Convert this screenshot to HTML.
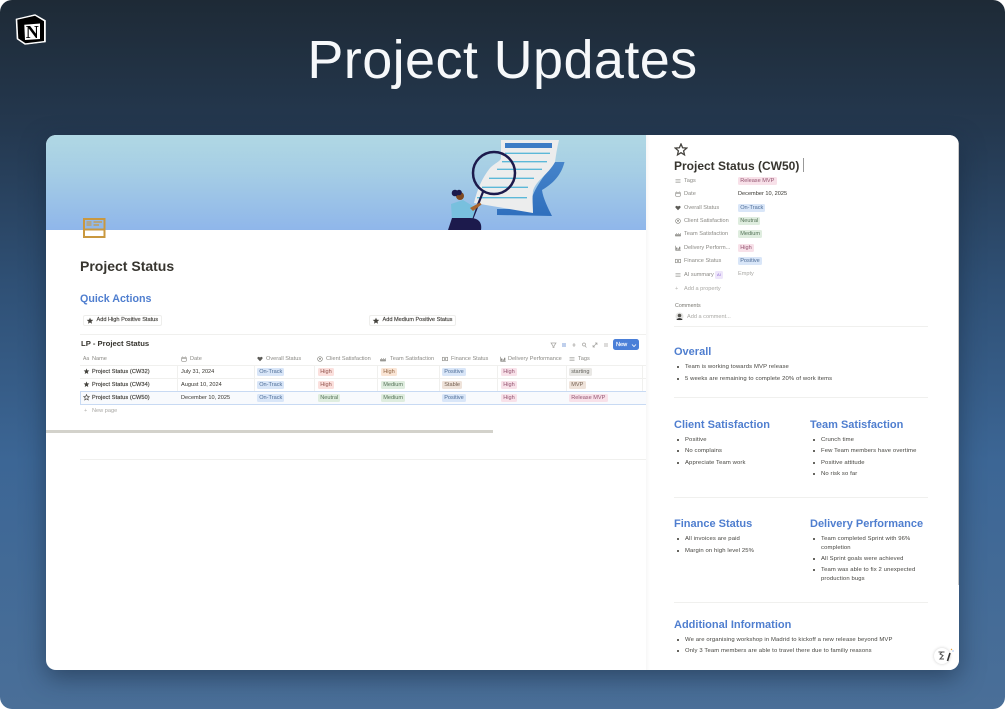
<!DOCTYPE html>
<html lang="en"><head><meta charset="utf-8"><title>Project Updates</title>
<style>
html,body{margin:0;padding:0;background:#fff}
body{width:1005px;height:709px;overflow:hidden;position:relative;font-family:"Liberation Sans",sans-serif}
#bg{position:absolute;inset:0;border-radius:12px;background:linear-gradient(180deg,#1e2a36 0%,#24384f 18%,#2f5075 40%,#3c6695 65%,#4a6f98 100%)}
h1{position:absolute;left:0;width:1005px;top:26px;margin:0;text-align:center;color:#f6f8fa;font-size:54px;line-height:68px;font-weight:400;letter-spacing:.4px}
#card{position:absolute;left:46px;top:135px;width:913px;height:535px;background:#fff;border-radius:10px;overflow:hidden;box-shadow:0 8px 24px rgba(20,35,55,.5)}
#wrap{position:absolute;left:-46px;top:-135px;width:1005px;height:709px;filter:blur(.35px)}
#hero{position:absolute;left:46px;top:135px;width:600px;height:95px;background:linear-gradient(180deg,#b0d8e4 0%,#a5cde5 40%,#8fb6ea 100%)}
#panel{position:absolute;left:646px;top:135px;width:313px;height:535px;background:linear-gradient(90deg,#f7f7f7 0,#fff 4px)}
.t,.p{position:absolute;white-space:nowrap;font-size:5.6px;line-height:8px;color:#37352f}
.g{color:#8a8984}
.m{color:#45433e;-webkit-text-stroke:.18px #45433e;letter-spacing:.1px}
.p{height:8px;padding:0 2.2px;border-radius:1.5px;line-height:8px}
.bl{background:#d9e6f8;color:#4d6c96}.re{background:#fbe0dd;color:#94554e}.gr{background:#dfeddf;color:#567459}
.or{background:#fae5d5;color:#8f6444}.pk{background:#f8e1e9;color:#935370}.gy{background:#e9e8e5;color:#65645e}.br{background:#efe3da;color:#745f50}
.h{position:absolute;white-space:nowrap;font-weight:700;color:#4f7ecf;font-size:11px;line-height:14px}
.hr{position:absolute;height:1px;background:#f0f0ee}
.btn{position:absolute;height:9px;background:#fff;border:1px solid #eeeeec;border-radius:2px;font-size:5.6px;line-height:9px;color:#45433e;-webkit-text-stroke:.15px #45433e;white-space:nowrap}
.li{position:absolute;white-space:nowrap;font-size:5.9px;letter-spacing:.12px;line-height:8px;color:#45443f}
.li:before{content:"";position:absolute;left:-8.5px;top:3px;width:2px;height:2px;border-radius:50%;background:#37352f}
.v{position:absolute;width:1px;background:#f0f0ee}
svg{position:absolute}
svg.i{width:6px;height:6px}
</style></head><body>
<svg width="0" height="0" style="left:0;top:0"><defs>
<symbol id="list" viewBox="0 0 12 12"><path d="M1 2.500H11M1 6H11M1 9.500H11" stroke="#8a8984" stroke-width="1.200" fill="none"/></symbol>
<symbol id="cal" viewBox="0 0 12 12"><rect x="1.500" y="2.500" width="9" height="8" rx="1" fill="none" stroke="#77766f" stroke-width="1.100"/><path d="M1.500 4.800H10.500M3.500 1V3M8.500 1V3" stroke="#77766f" stroke-width="1.100"/></symbol>
<symbol id="heart" viewBox="0 0 12 12"><path d="M6 10.500L1.200 5.500C.2 3.500 1.500 1.800 3.300 1.800C4.500 1.800 5.500 2.500 6 3.300C6.500 2.500 7.500 1.800 8.700 1.800C10.500 1.800 11.800 3.500 10.800 5.500Z" fill="#5c5b56"/></symbol>
<symbol id="face" viewBox="0 0 12 12"><circle cx="6" cy="6" r="4.800" fill="none" stroke="#77766f" stroke-width="1.100"/><circle cx="6" cy="4.800" r="1.500" fill="#77766f"/><path d="M3.500 8.500C4.500 7 7.500 7 8.500 8.500" stroke="#77766f" fill="none"/></symbol>
<symbol id="team" viewBox="0 0 12 12"><path d="M.5 10V6M3 10V4.500M5 10V6M7 10V4.500M9 10V6M11.500 10V4.500M.5 10H11.500" stroke="#66655f" stroke-width="1.100" fill="none"/></symbol>
<symbol id="chart" viewBox="0 0 12 12"><path d="M1 1.500V10.500H11.500" stroke="#66655f" fill="none"/><path d="M2.500 5H4.500V9.500H2.500ZM5.500 7H7.500V9.500H5.500ZM8.500 3.500H10.500V9.500H8.500Z" fill="#66655f"/></symbol>
<symbol id="money" viewBox="0 0 12 12"><rect x="1" y="2.500" width="10" height="7" fill="none" stroke="#77766f" stroke-width="1.100"/><rect x="4.500" y="4.500" width="3" height="3" fill="#77766f"/></symbol>
<symbol id="star" viewBox="-7 -7 14 14"><polygon points="0,-6 1.600,-2.200 5.700,-1.900 2.600,.8 3.500,4.900 0,2.700 -3.500,4.900 -2.600,.8 -5.700,-1.900 -1.600,-2.200" fill="#45433e"/></symbol>
<symbol id="ostar" viewBox="-7 -7 14 14"><polygon points="0,-6 1.600,-2.200 5.700,-1.900 2.600,.8 3.500,4.900 0,2.700 -3.500,4.900 -2.600,.8 -5.700,-1.900 -1.600,-2.200" fill="none" stroke="#45433e" stroke-width="1.300"/></symbol>
</defs></svg>
<div id="bg"></div>
<svg style="left:15px;top:14px" width="31" height="31" viewBox="0 0 31 31"><path d="M1 5 L20 .5 L30.500 6.500 V28 L10 30.500 L2 25 Z" fill="#fff" stroke="#fff" stroke-width=".6" stroke-linejoin="round"/><path d="M2.300 5.700 L20 1.800 L29 7.300 V27 L10.500 29.300 L3.300 24.500 Z" fill="#000"/><path d="M9.300 10.800 L25 9.500 V25 L10 26 Z" fill="#fff"/><text x="17.300" y="23.800" text-anchor="middle" font-family="Liberation Serif,serif" font-weight="700" font-size="18" fill="#000">N</text></svg>
<h1>Project Updates</h1>
<div id="card"><div id="wrap">
<div id="hero"></div>
<svg style="left:440px;top:135px" width="130" height="95" viewBox="440 135 130 95">
<defs><linearGradient id="sw" x1="0" y1="0" x2="0" y2="1"><stop offset="0" stop-color="#4684ca"/><stop offset="1" stop-color="#2f6fbd"/></linearGradient></defs>
<path d="M555 162 H564.500 C562 172 556 182 542 190 C543 198 548 208 552 216 L497 215 V209 H530 C530 195 540 180 555 162Z" fill="url(#sw)"/>
<path d="M501 140 H559 C557 148 556 155 555 162 C548 175 536 180 533 191 C532 199 533 206 533 213 L474 203 C477 190 482 178 490 168 C495 163 501 161 501 158 Z" fill="#eceded"/>
<path d="M505 143 H552 V148 H505 Z" fill="#3b7cc5"/>
<g stroke="#5bb8d8" stroke-width="1.400"><path d="M505 153.300H550M502 161.700H547M497 169.300H542M489 178.300H534M482 187.300H528M477 197.700H527"/></g>
<circle cx="494" cy="173" r="21" fill="none" stroke="#1c1a4c" stroke-width="2.500"/>
<path d="M483 192 L471 222" stroke="#1c1a4c" stroke-width="2.200"/>
<circle cx="460" cy="196" r="4" fill="#7f4a22"/><circle cx="455" cy="193" r="3.300" fill="#1c1a4c"/><circle cx="459" cy="192.500" r="2.800" fill="#1c1a4c"/>
<path d="M451 204 L463 200 L476 208 L472 220 H452 Z" fill="#78c0de"/>
<path d="M470 208 L480 202.500 L481.500 204.500 L473 211 Z" fill="#a8632c"/>
<path d="M452 218 H470 C480 218 482 224 481 230 H448 Z" fill="#1c1a4c"/>
</svg>
<svg style="left:83px;top:218px" width="23" height="20" viewBox="0 0 23 20"><rect x="1" y="1" width="20.500" height="18" fill="none" stroke="#c9983f" stroke-width="2"/><rect x="1" y="10.500" width="20.500" height="2" fill="#c9983f"/><rect x="3.500" y="3" width="5" height="5" fill="#c9983f" opacity=".55"/><path d="M10.500 4H19M10.500 7H16" stroke="#c9983f" stroke-width="1.200"/><rect x="2" y="12.500" width="18.500" height="5.500" fill="#fff"/></svg>
<div class="t" style="left:80px;top:258px;font-size:14px;line-height:17px;font-weight:700;color:#37352f">Project Status</div>
<div class="h" style="left:80px;top:292px;font-size:10.700px">Quick Actions</div>

<div class="btn" style="left:83px;top:315px;width:77px;text-indent:12.500px">Add High Positive Status</div>
<svg style="left:86px;top:317px" width="8" height="8"><use href="#star"/></svg>
<div class="btn" style="left:369px;top:315px;width:85px;text-indent:12.500px">Add Medium Positive Status</div>
<svg style="left:372px;top:317px" width="8" height="8"><use href="#star"/></svg>
<div class="hr" style="left:80px;top:334px;width:566px"></div>
<div class="t" style="left:81px;top:339px;font-size:7.700px;line-height:10px;font-weight:700;color:#37352f">LP - Project Status</div>

<svg style="left:549px;top:341px" width="62" height="8" viewBox="0 0 62 8" fill="none" stroke="#a5a4a0" stroke-width=".7"><path d="M2 2H7L5 5V6.500H4V5Z"/><path d="M14 2V6M16 2V6" stroke="#4a78c8"/><path d="M25 2V6M23.500 4H26.500"/><circle cx="35" cy="3.500" r="1.500"/><path d="M36 5L37.500 6.500M44 6L48 2M44 4V6H46M46 2H48V4"/><path d="M55 3H59M55 5H59"/></svg>
<div style="position:absolute;left:613px;top:339px;width:26px;height:11px;border-radius:2.500px;background:#4a7fd8"></div>
<div class="t" style="left:616px;top:340.500px;color:#fff;-webkit-text-stroke:.15px #fff">New</div>
<svg style="left:631px;top:343px" width="6" height="5" viewBox="0 0 6 5"><path d="M1 1.500L3 3.500L5 1.500" stroke="#fff" stroke-width=".8" fill="none"/></svg>

<div class="hr" style="left:80px;top:365px;width:566px"></div>
<div class="hr" style="left:80px;top:378px;width:566px"></div>
<div class="v" style="left:177px;top:365px;height:39px"></div><div class="v" style="left:254px;top:365px;height:39px"></div><div class="v" style="left:314px;top:365px;height:39px"></div><div class="v" style="left:377px;top:365px;height:39px"></div><div class="v" style="left:439px;top:365px;height:39px"></div><div class="v" style="left:497px;top:365px;height:39px"></div><div class="v" style="left:566px;top:365px;height:39px"></div><div class="v" style="left:642px;top:365px;height:39px"></div>
<div style="position:absolute;left:80px;top:391px;width:566px;height:12px;border:1px solid #c8daf3;border-right:0;background:#f8fafd"></div>

<div class="t g" style="left:83px;top:355px;font-size:5px">Aa</div><div class="t g" style="left:92px;top:355px">Name</div>
<svg class="i" style="left:181px;top:356px"><use href="#cal"/></svg><div class="t g" style="left:190px;top:355px">Date</div>
<svg class="i" style="left:257px;top:356px"><use href="#heart"/></svg><div class="t g" style="left:266px;top:355px">Overall Status</div>
<svg class="i" style="left:317px;top:356px"><use href="#face"/></svg><div class="t g" style="left:326px;top:355px">Client Satisfaction</div>
<svg class="i" style="left:380px;top:356px"><use href="#team"/></svg><div class="t g" style="left:390px;top:355px">Team Satisfaction</div>
<svg class="i" style="left:442px;top:356px"><use href="#money"/></svg><div class="t g" style="left:451px;top:355px">Finance Status</div>
<svg class="i" style="left:500px;top:356px"><use href="#chart"/></svg><div class="t g" style="left:508px;top:355px">Delivery Performance</div>
<svg class="i" style="left:569px;top:356px"><use href="#list"/></svg><div class="t g" style="left:578px;top:355px">Tags</div>

<svg style="left:83px;top:367.500px" width="7" height="7"><use href="#star"/></svg><div class="t m" style="left:92px;top:367.500px">Project Status (CW32)</div><div class="t" style="left:181px;top:367.500px">July 31, 2024</div>
<div class="p bl" style="left:257px;top:367.500px">On-Track</div><div class="p re" style="left:318px;top:367.500px">High</div><div class="p or" style="left:381px;top:367.500px">High</div><div class="p bl" style="left:442px;top:367.500px">Positive</div><div class="p pk" style="left:501px;top:367.500px">High</div><div class="p gy" style="left:569px;top:367.500px">starting</div>

<svg style="left:83px;top:380.500px" width="7" height="7"><use href="#star"/></svg><div class="t m" style="left:92px;top:380.500px">Project Status (CW34)</div><div class="t" style="left:181px;top:380.500px">August 10, 2024</div>
<div class="p bl" style="left:257px;top:380.500px">On-Track</div><div class="p re" style="left:318px;top:380.500px">High</div><div class="p gr" style="left:381px;top:380.500px">Medium</div><div class="p br" style="left:442px;top:380.500px">Stable</div><div class="p pk" style="left:501px;top:380.500px">High</div><div class="p br" style="left:569px;top:380.500px">MVP</div>

<svg style="left:83px;top:394px" width="7" height="7"><use href="#ostar"/></svg><div class="t m" style="left:92px;top:393.500px">Project Status (CW50)</div><div class="t" style="left:181px;top:393.500px">December 10, 2025</div>
<div class="p bl" style="left:257px;top:393.500px">On-Track</div><div class="p gr" style="left:318px;top:393.500px">Neutral</div><div class="p gr" style="left:381px;top:393.500px">Medium</div><div class="p bl" style="left:442px;top:393.500px">Positive</div><div class="p pk" style="left:501px;top:393.500px">High</div><div class="p pk" style="left:569px;top:393.500px">Release MVP</div>

<div class="t g" style="left:84px;top:407px;color:#b5b4b0">+</div><div class="t g" style="left:92px;top:407px;color:#a9a8a4">New page</div>
<div style="position:absolute;left:46px;top:430px;width:447px;height:3px;background:#d3d2cb"></div>
<div class="hr" style="left:80px;top:459px;width:566px"></div>

<div id="panel"></div>
<svg style="left:674px;top:143px" width="14" height="14"><use href="#ostar"/></svg>
<div class="t" style="left:674px;top:157.500px;font-size:12px;line-height:16px;font-weight:700;color:#37352f">Project Status (CW50)</div>
<div style="position:absolute;left:803px;top:158px;width:1px;height:14px;background:#999"></div>

<svg class="i" style="left:675px;top:178px"><use href="#list"/></svg><div class="t g" style="left:684px;top:177px">Tags</div><div class="p pk" style="left:738px;top:177px">Release MVP</div>
<svg class="i" style="left:675px;top:191px"><use href="#cal"/></svg><div class="t g" style="left:684px;top:190px">Date</div><div class="t" style="left:738px;top:190px">December 10, 2025</div>
<svg class="i" style="left:675px;top:204.500px"><use href="#heart"/></svg><div class="t g" style="left:684px;top:203.500px">Overall Status</div><div class="p bl" style="left:738px;top:203.500px">On-Track</div>
<svg class="i" style="left:675px;top:218px"><use href="#face"/></svg><div class="t g" style="left:684px;top:217px">Client Satisfaction</div><div class="p gr" style="left:738px;top:217px">Neutral</div>
<svg class="i" style="left:675px;top:231px"><use href="#team"/></svg><div class="t g" style="left:684px;top:230px">Team Satisfaction</div><div class="p gr" style="left:738px;top:230px">Medium</div>
<svg class="i" style="left:675px;top:245px"><use href="#chart"/></svg><div class="t g" style="left:684px;top:244px">Delivery Perform...</div><div class="p pk" style="left:738px;top:244px">High</div>
<svg class="i" style="left:675px;top:258px"><use href="#money"/></svg><div class="t g" style="left:684px;top:257px">Finance Status</div><div class="p bl" style="left:738px;top:257px">Positive</div>
<svg class="i" style="left:675px;top:272px"><use href="#list"/></svg><div class="t g" style="left:684px;top:271px">AI summary</div><div class="p" style="left:715px;top:271px;background:#eee6fa;color:#8a63d2;font-size:4px;padding:0 2px">AI</div><div class="t g" style="left:738px;top:270px;color:#a9a8a4">Empty</div>
<div class="t g" style="left:675px;top:284.500px;color:#b5b4b0">+</div><div class="t g" style="left:684px;top:284.500px;color:#a9a8a4">Add a property</div>
<div class="t g" style="left:675px;top:301.500px;color:#77766f;font-size:5.300px">Comments</div>
<svg style="left:675px;top:312px" width="9" height="9" viewBox="0 0 9 9"><circle cx="4.500" cy="4.500" r="4" fill="#e5e5e3"/><circle cx="4.500" cy="3.500" r="1.800" fill="#55544f"/><path d="M1.500 8C2 5.500 7 5.500 7.500 8Z" fill="#333"/></svg>
<div class="t g" style="left:687px;top:313px;color:#a9a8a4">Add a comment...</div>
<div class="hr" style="left:674px;top:326px;width:254px"></div>

<div class="h" style="left:674px;top:345px">Overall</div>
<div class="li" style="left:685px;top:363px">Team is working towards MVP release</div>
<div class="li" style="left:685px;top:374.500px">5 weeks are remaining to complete 20% of work items</div>
<div class="hr" style="left:674px;top:397px;width:254px"></div>

<div class="h" style="left:674px;top:418px">Client Satisfaction</div>
<div class="li" style="left:685px;top:435.500px">Positive</div>
<div class="li" style="left:685px;top:447px">No complains</div>
<div class="li" style="left:685px;top:458.500px">Appreciate Team work</div>
<div class="h" style="left:810px;top:418px">Team Satisfaction</div>
<div class="li" style="left:821px;top:435.500px">Crunch time</div>
<div class="li" style="left:821px;top:447px">Few Team members have overtime</div>
<div class="li" style="left:821px;top:458.500px">Positive attitude</div>
<div class="li" style="left:821px;top:469.500px">No risk so far</div>
<div class="hr" style="left:674px;top:497px;width:254px"></div>

<div class="h" style="left:674px;top:517px">Finance Status</div>
<div class="li" style="left:685px;top:535px">All invoices are paid</div>
<div class="li" style="left:685px;top:546.500px">Margin on high level 25%</div>
<div class="h" style="left:810px;top:517px">Delivery Performance</div>
<div class="li" style="left:821px;top:535px">Team completed Sprint with 96%</div>
<div class="t" style="left:821px;top:543.700px;font-size:5.900px;letter-spacing:.12px;color:#45443f">completion</div>
<div class="li" style="left:821px;top:555px">All Sprint goals were achieved</div>
<div class="li" style="left:821px;top:566px">Team was able to fix 2 unexpected</div>
<div class="t" style="left:821px;top:574.700px;font-size:5.900px;letter-spacing:.12px;color:#45443f">production bugs</div>
<div class="hr" style="left:674px;top:602px;width:254px"></div>

<div class="h" style="left:674px;top:618px">Additional Information</div>
<div class="li" style="left:685px;top:635.700px">We are organising workshop in Madrid to kickoff a new release beyond MVP</div>
<div class="li" style="left:685px;top:646.700px">Only 3 Team members are able to travel there due to familiy reasons</div>

<div style="position:absolute;left:958px;top:135px;width:1px;height:450px;background:#c9c9c9"></div>
<div style="position:absolute;left:934px;top:648px;width:16px;height:16px;border-radius:50%;background:#fff;box-shadow:0 0 3px rgba(0,0,0,.2)"></div>
<svg style="left:936px;top:646px" width="20" height="18" viewBox="0 0 20 18"><path d="M2.500 6H8.500M6 6 L4 8 L7 9.500 L4 13H8" fill="none" stroke="#555" stroke-width="1"/><path d="M11.500 15L14 7" stroke="#333" stroke-width="1.600"/><circle cx="15.500" cy="3.500" r=".7" fill="#e8a33d"/><circle cx="17" cy="5" r=".6" fill="#7a9fe0"/></svg>
</div></div>
</body></html>
